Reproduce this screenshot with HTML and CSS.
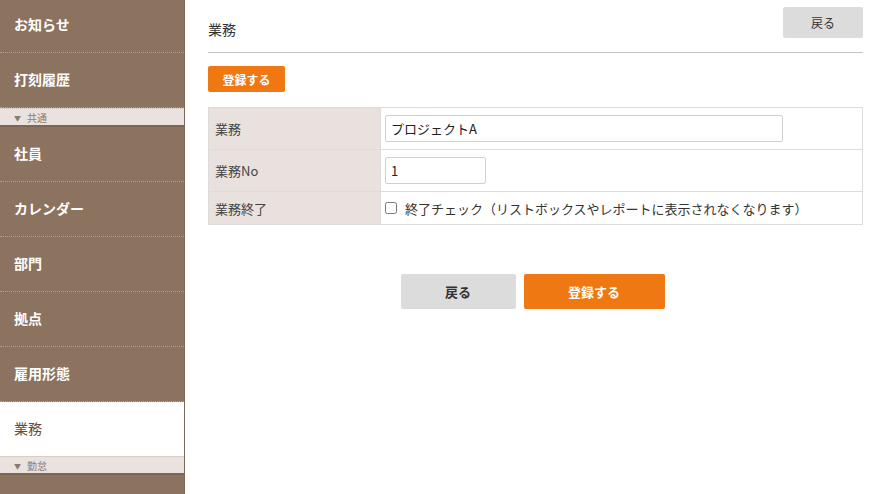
FILE: index.html
```html
<!DOCTYPE html>
<html>

<head>
    <title>業務</title>
    <link rel="stylesheet" href="styles.css">
</head>

<body>
    <div id="sidebar">
        <div class="nav-item">お知らせ</div>
        <div class="nav-item">打刻履歴</div>
        <div class="nav-section"><span class="arrow">▼</span>共通</div>
        <div class="nav-item">社員</div>
        <div class="nav-item">カレンダー</div>
        <div class="nav-item">部門</div>
        <div class="nav-item">拠点</div>
        <div class="nav-item">雇用形態</div>
        <div class="nav-item active">業務</div>
        <div class="nav-section"><span class="arrow">▼</span>勤怠</div>
    </div>

    <div id="main">
        <div class="page-header">
            <h1 class="page-title">業務</h1>
            <button class="btn btn-gray btn-back">戻る</button>
        </div>

        <button class="btn btn-orange btn-small">登録する</button>

        <table class="form-table">
            <tr class="row-tall">
                <th>業務</th>
                <td><input type="text" class="input-wide" value="プロジェクトA"></td>
            </tr>
            <tr class="row-tall">
                <th>業務No</th>
                <td><input type="text" class="input-short" value="1"></td>
            </tr>
            <tr class="row-short">
                <th>業務終了</th>
                <td>
                    <label class="check-label"><input type="checkbox"> 終了チェック（リストボックスやレポートに表示されなくなります）</label>
                </td>
            </tr>
        </table>

        <div class="form-actions">
            <button class="btn btn-gray btn-large-back">戻る</button>
            <button class="btn btn-orange btn-large-save">登録する</button>
        </div>
    </div>
</body>

</html>
```

FILE: styles.css
```css
body {
    margin: 0;
    display: flex;
    height: 494px;
    overflow: hidden;
    font-family: "Noto Sans CJK JP", "Noto Sans", sans-serif;
    color: #333;
}

#sidebar {
    width: 185px;
    flex-shrink: 0;
    background-color: #8c735f;
    height: 494px;
    overflow: hidden;
    border-right: 1px solid #7d6654;
    box-sizing: border-box;
}

.nav-item {
    height: 55px;
    line-height: 53px;
    padding-left: 14px;
    color: #fff;
    font-size: 14px;
    font-weight: bold;
    border-bottom: 1px dotted #b39f8f;
    box-sizing: border-box;
}

.nav-item:first-child {
    margin-top: -2px;
}

.nav-item.active {
    background-color: #fff;
    color: #5e4c40;
    font-weight: normal;
    border-bottom: none;
    height: 54px;
}

.nav-section {
    height: 19px;
    line-height: 18px;
    padding-left: 14px;
    font-size: 10px;
    color: #8a7a70;
    background-color: #e9e2df;
    border-top: 1px solid #d8cdc7;
    border-bottom: 2px solid #7d6654;
    box-sizing: border-box;
}

.nav-section .arrow {
    font-size: 7px;
    margin-right: 6px;
    vertical-align: 1px;
}

#main {
    flex: 1;
    padding: 0 12px 0 23px;
}

.page-header {
    display: flex;
    justify-content: space-between;
    align-items: flex-start;
    height: 53px;
    border-bottom: 1px solid #c4c4c4;
    box-sizing: border-box;
}

.page-title {
    margin: 19px 0 0 0;
    font-size: 14px;
    font-weight: normal;
    line-height: 20px;
    color: #333;
}

.btn {
    border: none;
    border-radius: 2px;
    font-family: "Noto Sans CJK JP", "Noto Sans", sans-serif;
    cursor: pointer;
    padding: 0;
}

.btn-gray {
    background-color: #dcdcdc;
    color: #333;
}

.btn-orange {
    background-color: #f07812;
    color: #fff;
    font-weight: bold;
}

.btn-back {
    margin-top: 7px;
    width: 80px;
    height: 31px;
    font-size: 12px;
}

.btn-small {
    display: block;
    margin-top: 13px;
    width: 77px;
    height: 26px;
    font-size: 12px;
}

.form-table {
    margin-top: 15px;
    width: 100%;
    border-collapse: collapse;
    font-size: 13px;
}

.form-table th,
.form-table td {
    border: 1px solid #dcdcdc;
    text-align: left;
    font-weight: normal;
}

.form-table th {
    width: 159px;
    padding: 0 6px;
    background-color: #e9e1de;
    color: #444;
}

.form-table td {
    padding: 0 4px;
}

.row-tall {
    height: 42px;
}

.row-short {
    height: 33px;
}

.form-table input[type="text"] {
    height: 27px;
    border: 1px solid #d0d0d0;
    border-radius: 2px;
    padding: 0 5px;
    font-size: 13px;
    color: #222;
    box-sizing: border-box;
    font-family: "Noto Sans CJK JP", "Noto Sans", sans-serif;
    display: block;
}

.input-wide {
    width: 398px;
}

.input-short {
    width: 101px;
}

.check-label {
    display: flex;
    align-items: center;
    gap: 8px;
    color: #333;
}

.check-label input {
    margin: 0;
    width: 12px;
    height: 12px;
}

.form-actions {
    display: flex;
    justify-content: center;
    gap: 8px;
    margin-top: 49px;
    padding-right: 6px;
}

.btn-large-back {
    width: 115px;
    height: 35px;
    font-size: 13px;
    font-weight: bold;
}

.btn-large-save {
    width: 141px;
    height: 35px;
    font-size: 13px;
}
```
